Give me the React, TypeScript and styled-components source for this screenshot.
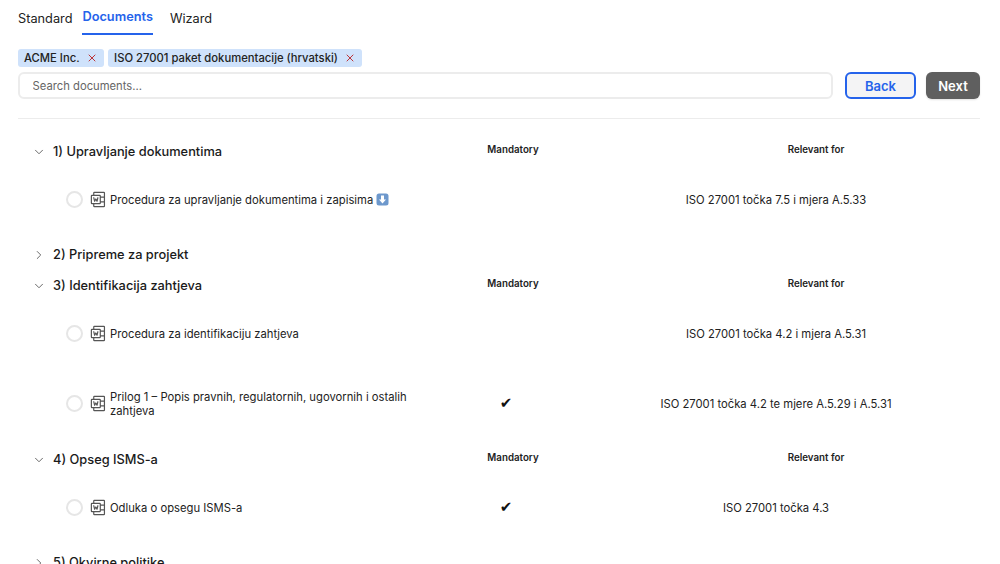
import React from 'react';
import styled, { createGlobalStyle } from 'styled-components';
import { ChevronDown, ChevronRight, X } from 'lucide-react';
import { PiMicrosoftWordLogo } from 'react-icons/pi';

const GlobalStyle = createGlobalStyle`
    html, body {
        margin: 0;
        height: 100%;
        overflow: hidden;
        background: #fff;
    }
    body {
        font-family: Inter, 'Liberation Sans', sans-serif;
        color: #1a1a1a;
        -webkit-font-smoothing: antialiased;
    }
`;

const Page = styled.div`
    padding: 0 20px 0 18px;
    height: 564px;
    overflow: hidden;
`;

const Tabs = styled.div`
    display: flex;
    gap: 10px;
    height: 35px;
`;

const Tab = styled.div<{ $active?: boolean }>`
    font-size: 12.75px;
    line-height: 16px;
    padding-top: ${(p) => (p.$active ? 9 : 11)}px;
    box-sizing: border-box;
    height: 35px;
    font-weight: ${(p) => (p.$active ? 600 : 400)};
    color: ${(p) => (p.$active ? '#2563eb' : '#222')};
    border-bottom: 2px solid ${(p) => (p.$active ? '#2563eb' : 'transparent')};
    margin-right: ${(p) => (p.$active ? 7 : 0)}px;
`;

const Chips = styled.div`
    display: flex;
    gap: 4px;
    margin-top: 14px;
`;

const Chip = styled.div`
    display: flex;
    align-items: center;
    gap: 6.5px;
    height: 18px;
    padding: 0 6px;
    border-radius: 3px;
    background: #cfe2fb;
    font-size: 11.25px;
    font-weight: 500;
    color: #222;
`;

const ChipClose = styled(X)`
    color: #b91c1c;
`;

const SearchRow = styled.div`
    display: flex;
    align-items: center;
    margin-top: 5px;
`;

const SearchInput = styled.input`
    flex: 0 0 815px;
    height: 27px;
    box-sizing: border-box;
    padding: 0 12.5px;
    border: 2px solid #ececec;
    border-radius: 6px;
    outline: none;
    font: 400 11.25px Inter, sans-serif;
    color: #222;
    &::placeholder {
        color: #666;
        opacity: 1;
    }
`;

const BackButton = styled.button`
    margin-left: 12px;
    width: 71px;
    height: 27px;
    box-sizing: border-box;
    border: 2px solid #2563eb;
    border-radius: 6px;
    background: #f4f4f5;
    color: #2563eb;
    font: 600 13px Inter, sans-serif;
`;

const NextButton = styled.button`
    margin-left: 10px;
    width: 54px;
    height: 27px;
    border: 0;
    border-radius: 6px;
    background: #5f5f5f;
    color: #fff;
    font: 600 13px Inter, sans-serif;
    box-shadow: 0 1px 2px rgba(0, 0, 0, 0.12);
`;

const Divider = styled.div`
    height: 1px;
    background: #ececec;
    margin-top: 19px;
    margin-bottom: 17px;
`;

const Section = styled.section<{ $open?: boolean }>`
    padding-bottom: ${(p) => (p.$open ? 5 : 2)}px;
`;

const SectionHeader = styled.div`
    display: grid;
    grid-template-columns: 445px 100px 1fr 300px;
    align-items: center;
    height: 29px;
    padding: 0 14px 0 0;
`;

const SectionTitle = styled.div`
    display: flex;
    align-items: center;
    gap: 7px;
    padding-left: 14px;
    font-size: 12.8px;
    line-height: 16px;
    padding-top: 3px;
    font-weight: 500;
    color: #1a1a1a;
    svg {
        color: #555;
    }
`;

const ColumnLabel = styled.div<{ $col: number }>`
    grid-column: ${(p) => p.$col};
    text-align: center;
    font-size: 9.75px;
    line-height: 12px;
    margin-top: -1px;
    font-weight: 600;
    color: #222;
`;

const ItemRow = styled.div`
    display: grid;
    grid-template-columns: 370px 140px 400px;
    align-items: center;
    box-sizing: border-box;
    min-height: 69px;
    padding: 21.5px 0 21.5px 48px;
`;

const ItemName = styled.div`
    display: flex;
    align-items: center;
`;

const Radio = styled.span`
    flex: none;
    width: 17px;
    height: 17px;
    box-sizing: border-box;
    border: 2px solid #e6e6e6;
    border-radius: 50%;
    margin-right: 6px;
`;

const WordIcon = styled(PiMicrosoftWordLogo)`
    flex: none;
    font-size: 19px;
    color: #555;
    margin-right: 2px;
`;

const ItemText = styled.span`
    font-size: 11.25px;
    line-height: 14px;
    color: #222;
`;

const DownloadBadge = styled.svg`
    width: 13px;
    height: 13px;
    vertical-align: -2.5px;
    margin-left: 3px;
`;

const Tick = styled.div`
    text-align: center;
    font-family: 'DejaVu Sans', sans-serif;
    font-size: 15px;
    line-height: 15px;
    color: #111;
`;

const Relevant = styled.div`
    text-align: center;
    font-size: 11.25px;
    color: #222;
`;

type Item = { name: string; mandatory?: boolean; relevant: string; download?: boolean };
type Group = { title: string; items?: Item[] };

const groups: Group[] = [
    {
        title: '1) Upravljanje dokumentima',
        items: [
            {
                name: 'Procedura za upravljanje dokumentima i zapisima',
                relevant: 'ISO 27001 točka 7.5 i mjera A.5.33',
                download: true,
            },
        ],
    },
    { title: '2) Pripreme za projekt' },
    {
        title: '3) Identifikacija zahtjeva',
        items: [
            {
                name: 'Procedura za identifikaciju zahtjeva',
                relevant: 'ISO 27001 točka 4.2 i mjera A.5.31',
            },
            {
                name: 'Prilog 1 – Popis pravnih, regulatornih, ugovornih i ostalih zahtjeva',
                mandatory: true,
                relevant: 'ISO 27001 točka 4.2 te mjere A.5.29 i A.5.31',
            },
        ],
    },
    {
        title: '4) Opseg ISMS-a',
        items: [
            {
                name: 'Odluka o opsegu ISMS-a',
                mandatory: true,
                relevant: 'ISO 27001 točka 4.3',
            },
        ],
    },
    { title: '5) Okvirne politike' },
];

const Download = () => (
    <DownloadBadge viewBox="0 0 13 13">
        <rect x="0.5" y="0.5" width="12" height="12" rx="2.5" fill="#6d98cc" />
        <path d="M5 2.5h3v4h2l-3.5 4-3.5-4h2z" fill="#fff" />
    </DownloadBadge>
);

export default function App() {
    return (
        <Page>
            <GlobalStyle />
            <Tabs>
                <Tab>Standard</Tab>
                <Tab $active>Documents</Tab>
                <Tab>Wizard</Tab>
            </Tabs>
            <Chips>
                <Chip>
                    ACME Inc. <ChipClose size={12} strokeWidth={1.75} />
                </Chip>
                <Chip>
                    ISO 27001 paket dokumentacije (hrvatski) <ChipClose size={12} strokeWidth={1.75} />
                </Chip>
            </Chips>
            <SearchRow>
                <SearchInput placeholder="Search documents..." />
                <BackButton>Back</BackButton>
                <NextButton>Next</NextButton>
            </SearchRow>
            <Divider />
            {groups.map((group) => (
                <Section key={group.title} $open={!!group.items}>
                    <SectionHeader>
                        <SectionTitle>
                            {group.items ? (
                                <ChevronDown size={14} strokeWidth={1.5} />
                            ) : (
                                <ChevronRight size={14} strokeWidth={1.5} />
                            )}
                            {group.title}
                        </SectionTitle>
                        {group.items && (
                            <>
                                <ColumnLabel $col={2}>Mandatory</ColumnLabel>
                                <ColumnLabel $col={4}>Relevant for</ColumnLabel>
                            </>
                        )}
                    </SectionHeader>
                    {group.items?.map((item) => (
                        <ItemRow key={item.name}>
                            <ItemName>
                                <Radio />
                                <WordIcon />
                                <ItemText>
                                    {item.name}
                                    {item.download && <Download />}
                                </ItemText>
                            </ItemName>
                            <Tick>{item.mandatory ? '✔' : ''}</Tick>
                            <Relevant>{item.relevant}</Relevant>
                        </ItemRow>
                    ))}
                </Section>
            ))}
        </Page>
    );
}
